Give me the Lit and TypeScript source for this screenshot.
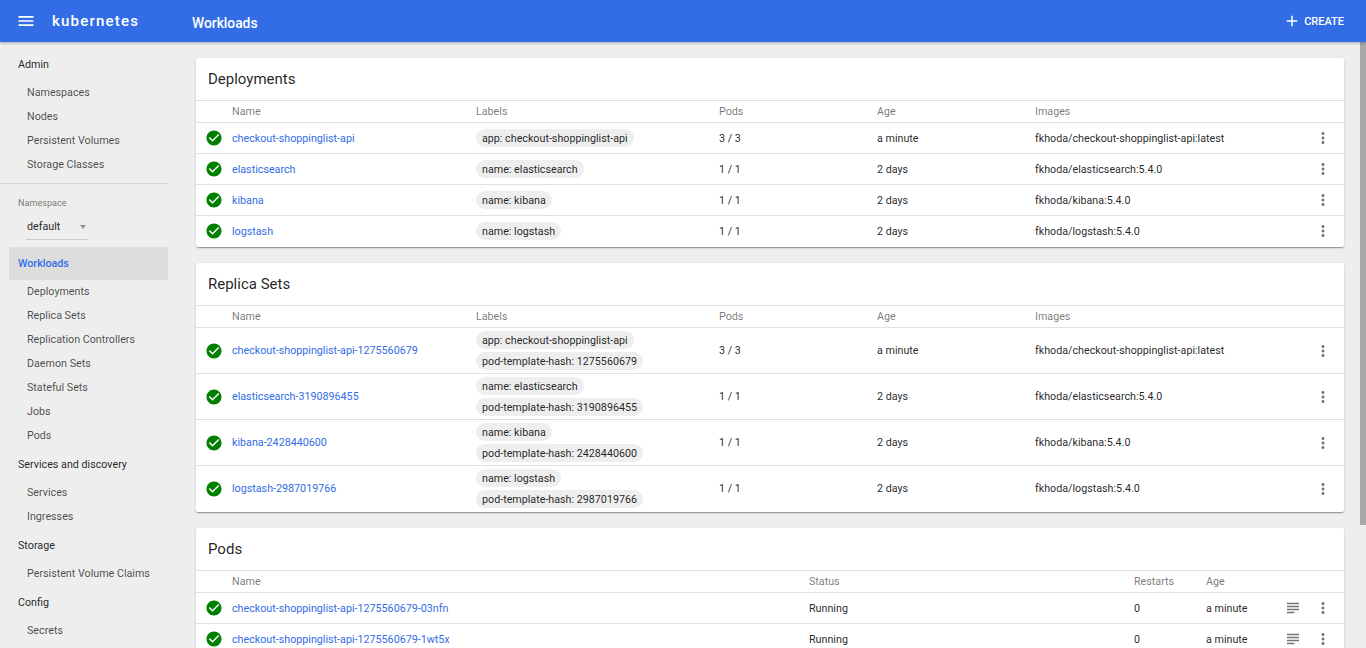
import { LitElement, html, css, svg } from "lit";
import { customElement } from "lit/decorators.js";

const ICONS = {
  menu: "M3 18h18v-2H3v2zm0-5h18v-2H3v2zm0-7v2h18V6H3z",
  add: "M19 13h-6v6h-2v-6H5v-2h6V5h2v6h6v2z",
  check: "M12 2C6.48 2 2 6.48 2 12s4.48 10 10 10 10-4.48 10-10S17.52 2 12 2zm-2 15l-5-5 1.41-1.41L10 14.17l7.59-7.59L19 8l-9 9z",
  more: "M12 8c1.1 0 2-.9 2-2s-.9-2-2-2-2 .9-2 2 .9 2 2 2zm0 2c-1.1 0-2 .9-2 2s.9 2 2 2 2-.9 2-2-.9-2-2-2zm0 6c-1.1 0-2 .9-2 2s.9 2 2 2 2-.9 2-2-.9-2-2-2z",
  subject: "M14 17H4v2h10v-2zm6-8H4v2h16V9zM4 15h16v-2H4v2zM4 5v2h16V5H4z",
};
const icon = (d: string, cls: string) =>
  html`<svg class=${cls} viewBox="0 0 24 24">${svg`<path d=${d}></path>`}</svg>`;

type Row = { name: string; labels: string[]; pods: string; age: string; image: string };

const deployments: Row[] = [
  { name: "checkout-shoppinglist-api", labels: ["app: checkout-shoppinglist-api"], pods: "3 / 3", age: "a minute", image: "fkhoda/checkout-shoppinglist-api:latest" },
  { name: "elasticsearch", labels: ["name: elasticsearch"], pods: "1 / 1", age: "2 days", image: "fkhoda/elasticsearch:5.4.0" },
  { name: "kibana", labels: ["name: kibana"], pods: "1 / 1", age: "2 days", image: "fkhoda/kibana:5.4.0" },
  { name: "logstash", labels: ["name: logstash"], pods: "1 / 1", age: "2 days", image: "fkhoda/logstash:5.4.0" },
];
const replicaSets: Row[] = [
  { name: "checkout-shoppinglist-api-1275560679", labels: ["app: checkout-shoppinglist-api", "pod-template-hash: 1275560679"], pods: "3 / 3", age: "a minute", image: "fkhoda/checkout-shoppinglist-api:latest" },
  { name: "elasticsearch-3190896455", labels: ["name: elasticsearch", "pod-template-hash: 3190896455"], pods: "1 / 1", age: "2 days", image: "fkhoda/elasticsearch:5.4.0" },
  { name: "kibana-2428440600", labels: ["name: kibana", "pod-template-hash: 2428440600"], pods: "1 / 1", age: "2 days", image: "fkhoda/kibana:5.4.0" },
  { name: "logstash-2987019766", labels: ["name: logstash", "pod-template-hash: 2987019766"], pods: "1 / 1", age: "2 days", image: "fkhoda/logstash:5.4.0" },
];
const pods = ["checkout-shoppinglist-api-1275560679-03nfn", "checkout-shoppinglist-api-1275560679-1wt5x"];

const nav: { title: string; items: string[] }[] = [
  { title: "Services and discovery", items: ["Services", "Ingresses"] },
  { title: "Storage", items: ["Persistent Volume Claims"] },
  { title: "Config", items: ["Secrets"] },
];

@customElement("app-root")
export class AppRoot extends LitElement {
  static styles = css`
    :host { display: flex; flex-direction: column; height: 648px; overflow: hidden; background: #eee;
      font-family: Roboto, sans-serif; font-size: 10.72px; color: rgba(0,0,0,.87); }
    .toolbar { flex: none; height: 42px; background: #326de6; color: #fff; display: flex; align-items: center;
      position: relative; z-index: 1; box-shadow: 0 1px 3px rgba(0,0,0,.3); }
    .menu-ic { width: 20px; height: 20px; fill: #fff; margin-left: 16px; }
    .logo { margin-left: 16px; width: 140px; font-weight: 500; font-size: 15px; letter-spacing: 1.2px; }
    .page { font-size: 13.8px; font-weight: 500; padding-top: 3px; }
    .spacer { flex: 1; }
    .create { display: flex; align-items: center; margin-right: 22px; font-size: 11px; font-weight: 500; }
    .add-ic { width: 18px; height: 18px; fill: #fff; margin-right: 3px; }
    .body { flex: 1; display: flex; min-height: 0; }
    .side { flex: none; width: 180px; box-sizing: border-box; padding: 5px 12px 0 0; overflow: hidden; }
    .sec { height: 33px; box-sizing: border-box; padding: 2px 0 0 18px; display: flex; align-items: center; color: rgba(0,0,0,.87); }
    .it { height: 24px; padding-left: 27px; display: flex; align-items: center; color: rgba(0,0,0,.7); }
    .divider { height: 1px; background: #d6d6d6; margin-top: 7px; }
    .ns-label { font-size: 9.1px; color: rgba(0,0,0,.54); padding: 13px 0 0 18px; line-height: 12px; }
    .ns { margin: 7px 0 7px 26px; width: 62px; height: 24px; box-sizing: border-box; border-bottom: 1px solid #ccc; display: flex; align-items: center; justify-content: space-between; padding: 0 0 2px 1px; }
    .arrow { width: 0; height: 0; border: 3px solid transparent; border-top: 4px solid rgba(0,0,0,.38); border-bottom: 0; margin-right: 2px; }
    .sec.active { margin: 0 0 -1px 9px; padding: 0 0 0 9px; background: #ddd; color: #326de6; font-weight: 500; border-radius: 2px 0 0 0; }
    .main { flex: 1; min-width: 0; padding: 16px 16px 0; overflow: hidden; }
    .card { background: #fff; border-radius: 2px; margin-bottom: 16px; box-shadow: 0 2px 1px -1px rgba(0,0,0,.2), 0 1px 1px 0 rgba(0,0,0,.14), 0 1px 3px 0 rgba(0,0,0,.12); }
    .title { height: 43px; box-sizing: border-box; border-bottom: 1px solid #e0e0e0; padding-left: 12px; display: flex; align-items: center; font-size: 15px; color: rgba(0,0,0,.87); }
    .row { display: grid; align-items: center; border-bottom: 1px solid #e0e0e0; box-sizing: border-box; height: 31px; }
    .row:last-child { border-bottom-color: transparent; }
    .row.tall { height: 46px; }
    .wl { grid-template-columns: 36px 244px 243px 158px 158px 1fr 42px; }
    .pd { grid-template-columns: 36px 577px 325px 72px 1fr 18px 42px; }
    .row.head { height: 22px; color: rgba(0,0,0,.54); }
    .check { width: 18px; height: 18px; fill: #008000; margin-left: 9px; display: block; }
    .link { color: #326de6; }
    .chips { display: flex; flex-direction: column; align-items: flex-start; gap: 3px; }
    .chip { height: 18px; line-height: 19px; background: #eee; border-radius: 9px; padding: 0 6px; white-space: nowrap; }
    .more, .subject { width: 18px; height: 18px; fill: rgba(0,0,0,.54); display: block; justify-self: center; }
    .scroll { flex: none; width: 6px; background: #eee; }
    .thumb { height: 483px; background: #a9a9a9; }
  `;

  private row(r: Row, tall: boolean) {
    return html`<div class="row wl ${tall ? "tall" : ""}">
      ${icon(ICONS.check, "check")}
      <span class="link">${r.name}</span>
      <div class="chips">${r.labels.map((l) => html`<span class="chip">${l}</span>`)}</div>
      <span>${r.pods}</span>
      <span>${r.age}</span>
      <span>${r.image}</span>
      ${icon(ICONS.more, "more")}
    </div>`;
  }

  private workloads(title: string, rows: Row[], tall: boolean) {
    return html`<section class="card">
      <div class="title">${title}</div>
      <div class="row wl head"><span></span><span>Name</span><span>Labels</span><span>Pods</span><span>Age</span><span>Images</span><span></span></div>
      ${rows.map((r) => this.row(r, tall))}
    </section>`;
  }

  render() {
    return html`
      <header class="toolbar">
        ${icon(ICONS.menu, "menu-ic")}
        <span class="logo">kubernetes</span>
        <span class="page">Workloads</span>
        <span class="spacer"></span>
        <span class="create">${icon(ICONS.add, "add-ic")}CREATE</span>
      </header>
      <div class="body">
        <nav class="side">
          <div class="sec">Admin</div>
          ${["Namespaces", "Nodes", "Persistent Volumes", "Storage Classes"].map((i) => html`<div class="it">${i}</div>`)}
          <div class="divider"></div>
          <div class="ns-label">Namespace</div>
          <div class="ns"><span>default</span><span class="arrow"></span></div>
          <div class="sec active">Workloads</div>
          ${["Deployments", "Replica Sets", "Replication Controllers", "Daemon Sets", "Stateful Sets", "Jobs", "Pods"].map((i) => html`<div class="it">${i}</div>`)}
          ${nav.map((s) => html`<div class="sec">${s.title}</div>${s.items.map((i) => html`<div class="it">${i}</div>`)}`)}
        </nav>
        <main class="main">
          ${this.workloads("Deployments", deployments, false)}
          ${this.workloads("Replica Sets", replicaSets, true)}
          <section class="card">
            <div class="title">Pods</div>
            <div class="row pd head"><span></span><span>Name</span><span>Status</span><span>Restarts</span><span>Age</span><span></span><span></span></div>
            ${pods.map((p) => html`<div class="row pd">
              ${icon(ICONS.check, "check")}
              <span class="link">${p}</span>
              <span>Running</span>
              <span>0</span>
              <span>a minute</span>
              ${icon(ICONS.subject, "subject")}
              ${icon(ICONS.more, "more")}
            </div>`)}
          </section>
        </main>
        <div class="scroll"><div class="thumb"></div></div>
      </div>
    `;
  }
}
